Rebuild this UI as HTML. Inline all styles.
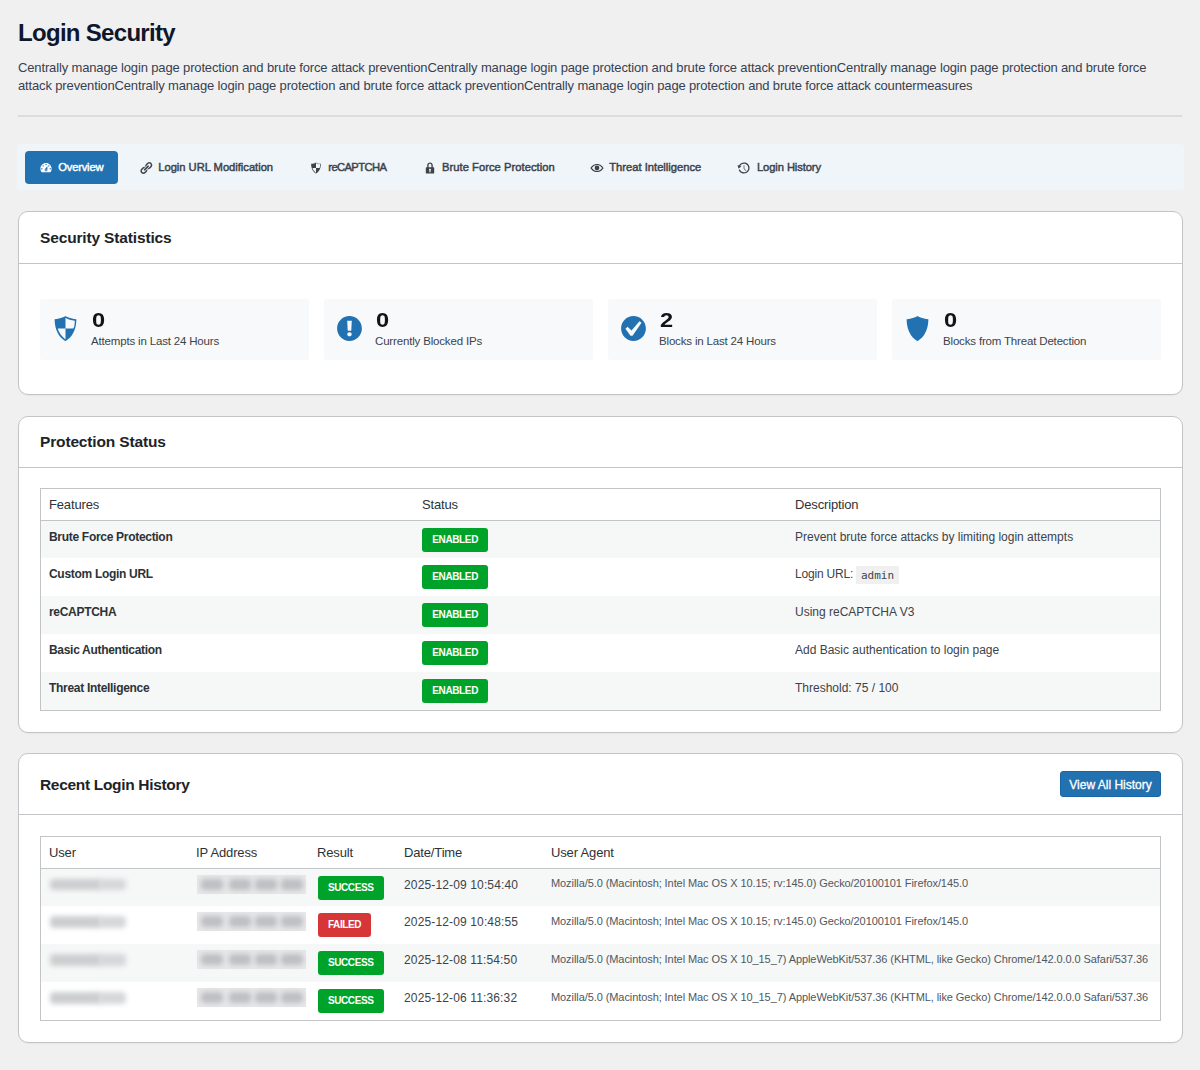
<!DOCTYPE html>
<html lang="en">
<head>
<meta charset="utf-8">
<title>Login Security</title>
<style>
*{box-sizing:border-box;margin:0;padding:0}
html,body{width:1200px;height:1070px;overflow:hidden}
body{background:#f0f0f1;font-family:"Liberation Sans",sans-serif;color:#3c434a;font-size:13px;position:relative}
h1{position:absolute;left:18px;top:18px;font-size:24px;line-height:30px;font-weight:700;color:#0f172a;letter-spacing:-0.7px;white-space:nowrap}
.desc{position:absolute;left:18px;top:59px;width:1165px;font-size:13px;line-height:18px;color:#374151;letter-spacing:-0.145px}
.hr{position:absolute;left:18px;top:115px;width:1164px;height:2px;background:#dcdcde}
.tabs{position:absolute;left:16.5px;top:144px;width:1167.5px;height:46px;background:#eff5f9;border-radius:4px}
.tab{position:absolute;top:7px;height:33px;line-height:33px;font-size:11.2px;font-weight:400;-webkit-text-stroke:0.45px currentColor;letter-spacing:-0.1px;color:#3c434a;white-space:nowrap;display:flex;align-items:center}
.tab svg{margin-right:5.5px;flex:none}
.tab.active{background:#2271b1;color:#fff;border-radius:4px;padding:0 0 0 13.7px;width:93.3px}
.card{position:absolute;left:17.5px;width:1165.5px;background:#fff;border:1px solid #c3c4c7;border-radius:10px;box-shadow:0 1px 1px rgba(0,0,0,.04)}
.card h2{position:absolute;left:21px;font-size:15.5px;font-weight:700;color:#1d2327;line-height:20px;white-space:nowrap;letter-spacing:-0.15px}
.card>*{margin-left:.5px}
.card .div{margin-left:0;position:absolute;left:0;right:0;height:1px;background:#c3c4c7}
.stat{position:absolute;top:87px;width:269px;height:61px;background:#f8f9fa;border-radius:3px}
.stat .num{position:absolute;left:51.5px;top:8.5px;font-size:20.5px;line-height:24px;font-weight:700;color:#101517;transform:scaleX(1.15);transform-origin:0 0}
.stat .lbl{position:absolute;left:51px;top:34px;font-size:11.5px;line-height:16px;color:#3c434a;white-space:nowrap;letter-spacing:-0.17px}
.stat svg{position:absolute;left:9.5px;top:14px}
.tw{position:absolute;left:21px;width:1121px;border:1px solid #c3c4c7;background:#fff}
table{border-collapse:collapse;width:100%;table-layout:fixed}
th{font-weight:400;text-align:left;font-size:13px;color:#2c3338;padding:2px 9px 0 8px;height:31px;border-bottom:1px solid #c3c4c7;line-height:28px;letter-spacing:-0.15px}
td{padding:0 9px 0 8px;height:38px;font-size:12px;color:#3c434a;vertical-align:top;white-space:nowrap}
tbody tr:nth-child(odd){background:#f6f7f7}
.t3 td{height:38px}
.t3 .badge{margin-left:.6px}
td.b{font-weight:700;color:#2c3338;letter-spacing:-0.3px}
td .t{display:block;line-height:16px;padding-top:8px}
td.dt{letter-spacing:.14px}
.badge{display:inline-block;margin-top:7px;height:24px;line-height:24px;padding:0 10.3px;border-radius:3px;background:#00a32a;color:#fff;font-size:10px;font-weight:700;letter-spacing:-.38px}
.badge.red{background:#d63638}
code{font-family:"DejaVu Sans Mono","Liberation Mono",monospace;font-size:11px;background:#f0f0f1;padding:2.5px 4.5px;margin-left:0;letter-spacing:0}
.btn{position:absolute;right:21px;top:17px;height:26px;line-height:26px;width:101px;text-align:center;background:#2271b1;color:#fff;font-size:12px;font-weight:400;-webkit-text-stroke:0.3px #fff;border-radius:3px;white-space:nowrap;border:1px solid #1c65a3;line-height:26px}
td.ua{font-size:11px;letter-spacing:-0.08px;color:#50575e}
td.ua .t{padding-top:7px}
tbody tr:first-child td.ua .t{padding-top:6.5px}
.bu{position:relative;display:block;width:80.5px;height:16px;margin-top:7.5px;margin-left:-1.5px}
.bu i{position:absolute;top:2.5px;height:11.5px;background:#cdced0;filter:blur(2.8px);border-radius:4px}
.bi{position:relative;display:block;width:109px;height:19px;margin-top:6px;margin-left:1px;background:#e7e7e9;filter:blur(.5px)}
.bi i{position:absolute;top:4px;height:11px;background:#bebfc2;filter:blur(2.8px);border-radius:4px}
</style>
</head>
<body>
<h1>Login Security</h1>
<p class="desc">Centrally manage login page protection and brute force attack preventionCentrally manage login page protection and brute force attack preventionCentrally manage login page protection and brute force attack preventionCentrally manage login page protection and brute force attack preventionCentrally manage login page protection and brute force attack countermeasures</p>
<div class="hr"></div>

<div class="tabs">
  <div class="tab active" style="left:8.5px">
    <svg width="14" height="14" viewBox="0 0 20 20"><path fill="#fff" d="M3.760 16h12.480c1.100-1.370 1.760-3.110 1.760-5 0-4.420-3.580-8-8-8s-8 3.580-8 8c0 1.890.66 3.630 1.760 5zM10 4c.55 0 1 .45 1 1s-.45 1-1 1-1-.45-1-1 .45-1 1-1zM6 6c.55 0 1 .45 1 1s-.45 1-1 1-1-.45-1-1 .45-1 1-1zm8 0c.55 0 1 .45 1 1s-.45 1-1 1-1-.45-1-1 .45-1 1-1zm-5.370 5.550L12 7v6c0 1.100-.9 2-2 2s-2-.9-2-2c0-.57.24-1.080.63-1.450zM4 10c.55 0 1 .45 1 1s-.45 1-1 1-1-.45-1-1 .45-1 1-1zm12 0c.55 0 1 .45 1 1s-.45 1-1 1-1-.45-1-1 .45-1 1-1zm-5 3c0-.55-.45-1-1-1s-1 .45-1 1 .45 1 1 1 1-.45 1-1z"/></svg><span style="letter-spacing:-0.2px;margin-left:.1px">Overview</span></div>
  <div class="tab" style="left:122.25px">
    <svg width="14" height="14" viewBox="0 0 20 20"><path fill="#3c434a" d="M17.740 2.760c1.680 1.690 1.680 4.410 0 6.100l-1.530 1.520c-1.120 1.120-2.700 1.470-4.140 1.090l2.620-2.610.76-.77.760-.76c.840-.84.840-2.200 0-3.040-.84-.85-2.200-.85-3.040 0l-.77.76-3.380 3.380c-.37-1.440-.02-3.020 1.100-4.140l1.520-1.530c1.690-1.680 4.420-1.680 6.100 0zM8.590 13.430l5.340-5.340c.42-.42.42-1.100 0-1.520-.44-.43-1.130-.39-1.530 0l-5.330 5.340c-.42.42-.42 1.100 0 1.520.44.430 1.130.39 1.520 0zm-.76 2.290l4.140-4.150c.38 1.440.03 3.020-1.090 4.140l-1.520 1.530c-1.690 1.680-4.410 1.680-6.100 0-1.680-1.680-1.680-4.420 0-6.100l1.530-1.520c1.120-1.120 2.700-1.470 4.140-1.100l-4.140 4.150c-.85.840-.85 2.200 0 3.050.84.840 2.200.840 3.040 0z"/></svg><span style="letter-spacing:-0.02px">Login URL Modification</span></div>
  <div class="tab" style="left:292.25px">
    <svg width="14" height="14" viewBox="0 0 20 20"><path fill="#3c434a" d="M10 2s3 2 7 2c0 11-7 14-7 14S3 15 3 4c4 0 7-2 7-2zm0 8h5s1-1 1-5c0 0-5-1-6-2v7H5c1 4 5 7 5 7v-7z"/></svg><span style="letter-spacing:-0.6px">reCAPTCHA</span></div>
  <div class="tab" style="left:406px">
    <svg width="14" height="14" viewBox="0 0 20 20"><path fill="#3c434a" d="M14 9h1c.55 0 1 .45 1 1v7c0 .55-.45 1-1 1H5c-.55 0-1-.45-1-1v-7c0-.55.45-1 1-1h1V6c0-2.210 1.790-4 4-4s4 1.790 4 4v3zm-2 0V6c0-1.100-.9-2-2-2s-2 .9-2 2v3h4zm-1 7l-.36-2.150c.51-.24.86-.75.86-1.350 0-.83-.67-1.500-1.500-1.500s-1.500.67-1.500 1.500c0 .6.35 1.110.86 1.350L9 16h2z"/></svg><span style="letter-spacing:0.04px">Brute Force Protection</span></div>
  <div class="tab" style="left:573.25px">
    <svg width="14" height="14" viewBox="0 0 20 20"><path fill="#3c434a" fill-rule="evenodd" d="M10 4.200C5.200 4.200 1.800 7.700.6 10c1.200 2.300 4.600 5.800 9.400 5.800s8.200-3.500 9.400-5.800C18.200 7.700 14.800 4.200 10 4.200zm0 10c-3.400 0-6-2.300-7.300-4.200C4 8.100 6.600 5.800 10 5.800s6 2.300 7.300 4.200c-1.300 1.900-3.900 4.200-7.300 4.200z"/><circle cx="10" cy="10" r="3.400" fill="#3c434a"/></svg><span style="letter-spacing:0px">Threat Intelligence</span></div>
  <div class="tab" style="left:720px">
    <svg width="14" height="14" viewBox="0 0 20 20"><path fill="#3c434a" d="M13.650 2.880c3.930 2.010 5.480 6.840 3.470 10.770s-6.830 5.480-10.770 3.470c-1.870-.96-3.200-2.560-3.860-4.400l1.640-1.030c.45 1.570 1.520 2.950 3.080 3.760 3.010 1.540 6.690.35 8.230-2.660 1.550-3.010.36-6.690-2.650-8.240C9.780 3.010 6.100 4.200 4.560 7.210l1.880.8-4.470 2.590L.86 5.740l1.880.79c2.070-3.880 6.930-5.390 10.910-3.650zM10.500 6h-1v5.170l3.290 3.290.71-.71-3-2.990V6z"/></svg><span style="margin-left:1px">Login History</span></div>
</div>

<!-- Card 1 -->
<div class="card" style="top:211px;height:184px">
  <h2 style="top:16px">Security Statistics</h2>
  <div class="div" style="top:51px"></div>
  <div class="stat" style="left:21px">
    <svg width="31" height="31" viewBox="0 0 20 20"><path fill="#2271b1" d="M10 2s3 2 7 2c0 11-7 14-7 14S3 15 3 4c4 0 7-2 7-2zm0 8h5s1-1 1-5c0 0-5-1-6-2v7H5c1 4 5 7 5 7v-7z"/></svg>
    <div class="num">0</div><div class="lbl">Attempts in Last 24 Hours</div>
  </div>
  <div class="stat" style="left:305px">
    <svg width="31" height="31" viewBox="0 0 20 20"><path fill="#2271b1" d="M10 2c4.420 0 8 3.580 8 8s-3.580 8-8 8-8-3.580-8-8 3.580-8 8-8zm1.130 9.380l.35-6.460H8.520l.35 6.460h2.260zm-.09 3.360c.24-.23.37-.55.37-.96 0-.42-.12-.74-.36-.97s-.59-.35-1.060-.35-.82.12-1.070.35-.37.55-.37.97c0 .41.130.73.380.96.260.23.610.34 1.060.34s.8-.11 1.050-.34z"/></svg>
    <div class="num">0</div><div class="lbl">Currently Blocked IPs</div>
  </div>
  <div class="stat" style="left:589px">
    <svg width="31" height="31" viewBox="0 0 20 20"><path fill="#2271b1" d="M10 2c-4.420 0-8 3.580-8 8s3.580 8 8 8 8-3.580 8-8-3.580-8-8-8zm-.615 12.660h-1.340l-3.240-4.540 1.341-1.250 2.569 2.400 5.141-5.931 1.340.94-5.811 8.381z"/></svg>
    <div class="num">2</div><div class="lbl">Blocks in Last 24 Hours</div>
  </div>
  <div class="stat" style="left:873px">
    <svg width="31" height="31" viewBox="0 0 20 20"><path fill="#2271b1" d="M10 2s3 2 7 2c0 11-7 14-7 14S3 15 3 4c4 0 7-2 7-2z"/></svg>
    <div class="num">0</div><div class="lbl">Blocks from Threat Detection</div>
  </div>
</div>

<!-- Card 2 -->
<div class="card" style="top:416px;height:317px">
  <h2 style="top:15px">Protection Status</h2>
  <div class="div" style="top:50px"></div>
  <div class="tw" style="top:71px">
  <table>
    <colgroup><col style="width:373px"><col style="width:373px"><col></colgroup>
    <thead><tr><th>Features</th><th>Status</th><th>Description</th></tr></thead>
    <tbody>
      <tr><td class="b"><span class="t">Brute Force Protection</span></td><td><span class="badge">ENABLED</span></td><td><span class="t">Prevent brute force attacks by limiting login attempts</span></td></tr>
      <tr><td class="b"><span class="t">Custom Login URL</span></td><td><span class="badge">ENABLED</span></td><td><span class="t"><span style="letter-spacing:-.2px">Login URL:</span> <code>admin</code></span></td></tr>
      <tr><td class="b"><span class="t">reCAPTCHA</span></td><td><span class="badge">ENABLED</span></td><td><span class="t">Using reCAPTCHA V3</span></td></tr>
      <tr><td class="b"><span class="t">Basic Authentication</span></td><td><span class="badge">ENABLED</span></td><td><span class="t">Add Basic authentication to login page</span></td></tr>
      <tr><td class="b"><span class="t">Threat Intelligence</span></td><td><span class="badge">ENABLED</span></td><td><span class="t">Threshold: 75 / 100</span></td></tr>
    </tbody>
  </table>
  </div>
</div>

<!-- Card 3 -->
<div class="card" style="top:753px;height:290px">
  <h2 style="top:21px;letter-spacing:-0.32px">Recent Login History</h2>
  <div class="btn">View All History</div>
  <div class="div" style="top:60px"></div>
  <div class="tw" style="top:82px">
  <table class="t3">
    <colgroup><col style="width:147px"><col style="width:121px"><col style="width:87px"><col style="width:147px"><col></colgroup>
    <thead><tr><th>User</th><th>IP Address</th><th>Result</th><th>Date/Time</th><th>User Agent</th></tr></thead>
    <tbody>
      <tr><td><span class="bu"><i style="left:2px;width:52px"></i><i style="left:51px;width:27px;background:#d6d7d9"></i></span></td><td><span class="bi"><i style="left:4px;width:22px"></i><i style="left:32px;width:22px"></i><i style="left:58px;width:22px"></i><i style="left:84px;width:22px"></i></span></td><td><span class="badge">SUCCESS</span></td><td class="dt"><span class="t">2025-12-09 10:54:40</span></td><td class="ua"><span class="t">Mozilla/5.0 (Macintosh; Intel Mac OS X 10.15; rv:145.0) Gecko/20100101 Firefox/145.0</span></td></tr>
      <tr><td><span class="bu"><i style="left:2px;width:52px"></i><i style="left:51px;width:27px;background:#d6d7d9"></i></span></td><td><span class="bi"><i style="left:4px;width:22px"></i><i style="left:32px;width:22px"></i><i style="left:58px;width:22px"></i><i style="left:84px;width:22px"></i></span></td><td><span class="badge red">FAILED</span></td><td class="dt"><span class="t">2025-12-09 10:48:55</span></td><td class="ua"><span class="t">Mozilla/5.0 (Macintosh; Intel Mac OS X 10.15; rv:145.0) Gecko/20100101 Firefox/145.0</span></td></tr>
      <tr><td><span class="bu"><i style="left:2px;width:52px"></i><i style="left:51px;width:27px;background:#d6d7d9"></i></span></td><td><span class="bi"><i style="left:4px;width:22px"></i><i style="left:32px;width:22px"></i><i style="left:58px;width:22px"></i><i style="left:84px;width:22px"></i></span></td><td><span class="badge">SUCCESS</span></td><td class="dt"><span class="t">2025-12-08 11:54:50</span></td><td class="ua"><span class="t">Mozilla/5.0 (Macintosh; Intel Mac OS X 10_15_7) AppleWebKit/537.36 (KHTML, like Gecko) Chrome/142.0.0.0 Safari/537.36</span></td></tr>
      <tr><td><span class="bu"><i style="left:2px;width:52px"></i><i style="left:51px;width:27px;background:#d6d7d9"></i></span></td><td><span class="bi"><i style="left:4px;width:22px"></i><i style="left:32px;width:22px"></i><i style="left:58px;width:22px"></i><i style="left:84px;width:22px"></i></span></td><td><span class="badge">SUCCESS</span></td><td class="dt"><span class="t">2025-12-06 11:36:32</span></td><td class="ua"><span class="t">Mozilla/5.0 (Macintosh; Intel Mac OS X 10_15_7) AppleWebKit/537.36 (KHTML, like Gecko) Chrome/142.0.0.0 Safari/537.36</span></td></tr>
    </tbody>
  </table>
  </div>
</div>
</body>
</html>
